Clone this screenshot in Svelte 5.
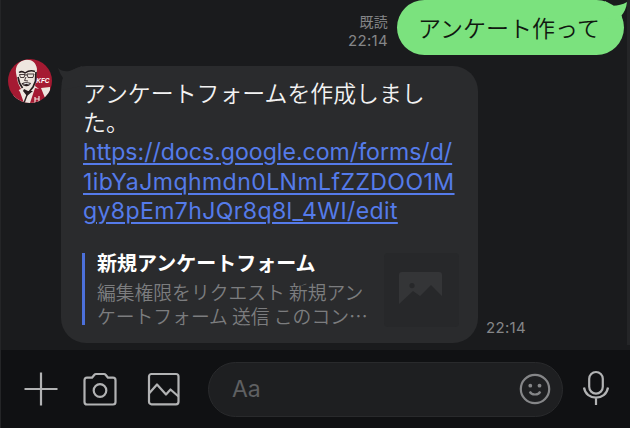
<script lang="ts">
	const sent = { text: 'アンケート作って', read: '既読', time: '22:14' };
	const received = {
		lines: ['アンケートフォームを作成しまし', 'た。'],
		link: ['https://docs.google.com/forms/d/', '1ibYaJmqhmdn0LNmLfZZDOO1M', 'gy8pEm7hJQr8q8l_4WI/edit'],
		title: '新規アンケートフォーム',
		description: ['編集権限をリクエスト 新規アン', 'ケートフォーム 送信 このコン…'],
		time: '22:14',
	};
</script>

<div class="screen">
	<main>
		<div class="row sent">
			<div class="meta">
				<span class="read">{sent.read}</span>
				<span>{sent.time}</span>
			</div>
			<div class="bubble green">
				{sent.text}
				<svg class="tail" width="24" height="22" viewBox="0 0 24 22">
					<path d="M1 1L7 5.6C12 6 18 5 23 2C22.5 8 20 12.5 17.5 15.5L18.5 21L1 18Z" fill="#7be27e" />
				</svg>
			</div>
		</div>

		<div class="row received">
			<svg class="avatar" width="44" height="44" viewBox="0 0 44 44">
				<defs>
					<clipPath id="face"><circle cx="22" cy="22" r="22" /></clipPath>
				</defs>
				<g clip-path="url(#face)">
					<rect width="44" height="44" fill="#a51a32" />
					<path d="M8 14C7 7 11 2 17 1C23 0 28 3 29 10L28 20L27 27L31 30L33 44H4L6 33L13 30L10 24Z" fill="#eee6df" />
					<path d="M10 30L5 32L4 44H16L12 33ZM27 29L36 31L38 44H22Z" fill="#a51a32" />
					<path d="M33 29L37 39L42 36V28Z" fill="#eee6df" />
					<path d="M27 38V44M31 37V44M27 40H31" fill="none" stroke="#eee6df" stroke-width="1.2" />
					<path d="M11 13.500Q14 11.500 17 14Q22 10.500 27 12.500" fill="none" stroke="#261b1d" stroke-width="1.500" />
					<path d="M11.500 15.500H17L16 18.500H12.500ZM19 15H26L25 18.500H20ZM17 16H19M18 18L16.500 21.500L20 22" fill="none" stroke="#35282a" stroke-width=".9" />
					<path d="M28 13L27.500 22L25 28L21 33M10 18L11.500 24L14.500 29" fill="none" stroke="#261b1d" stroke-width="1.700" />
					<path d="M13.500 24.500Q17 22.500 23 24Q21.500 27.500 18 27.200Q15 27 13.500 24.500ZM16 30L15 32L19 37L25 32L20 32Z" fill="#261b1d" />
					<path d="M15.500 25Q18 24 21.500 25" fill="none" stroke="#fff" />
					<path d="M19 36L16 44" stroke="#261b1d" stroke-width="1.400" />
				</g>
				<text x="28.2" y="23.7">KFC</text>
			</svg>
			<div class="bubble dark">
				<svg class="tail" width="26" height="24" viewBox="0 0 26 24">
					<path d="M1 2C5 6 11 6 15 4L25 0V20L5 24Q4 15 6 12Q3 8 1 2Z" fill="#2a2b2d" />
				</svg>
				<div class="message">
					{#each received.lines as line}
						<div>{line}</div>
					{/each}
					<div class="link">
						{#each received.link as part, i}
							<div><span class="part{i}">{part}</span></div>
						{/each}
					</div>
				</div>
				<div class="preview">
					<div class="summary">
						<strong>{received.title}</strong>
						{#each received.description as line}
							<div>{line}</div>
						{/each}
					</div>
					<div class="thumb">
						<svg width="43" height="35" viewBox="0 0 43 35">
							<path fill-rule="evenodd" d="M3 0H40Q43 0 43 3V24L32 13L21 24L14 19L0 32V3Q0 0 3 0ZM13 11A2.6 2.6 0 1 0 13 16.2A2.6 2.6 0 1 0 13 11Z" fill="#343537" />
						</svg>
					</div>
				</div>
			</div>
			<span class="time">{received.time}</span>
		</div>
		<div class="scrollbar"></div>
	</main>

	<footer>
		<svg class="plus" width="34" height="34" viewBox="0 0 34 34">
			<path d="M17 .5V33.5M.5 17H33.5" />
		</svg>
		<svg class="camera" width="34" height="34" viewBox="0 0 34 34">
			<path d="M4 5.7H9L11.2 3Q12 2 13 2H21Q22 2 22.8 3L25 5.7H30Q32.5 5.7 32.5 8.2V30Q32.5 32.5 30 32.5H4Q1.5 32.5 1.5 30V8.2Q1.5 5.7 4 5.7Z" />
			<circle cx="17" cy="18.5" r="6.3" />
		</svg>
		<svg class="gallery" width="34" height="34" viewBox="0 0 34 34">
			<rect x="2" y="2" width="29.5" height="30.3" rx="2.5" />
			<path d="M2 21.5L10 12.5L19 22.5L23.5 17.5L31.5 24.5" />
		</svg>
		<div class="input">
			<span>Aa</span>
			<svg class="smile" width="32" height="32" viewBox="0 0 32 32">
				<circle cx="16" cy="16" r="14.2" />
				<path d="M10.8 18.5C12.3 22.5 19.7 22.5 21.2 18.5" />
				<circle class="eye" cx="11.3" cy="12.7" r="1.9" />
				<circle class="eye" cx="20.5" cy="12.7" r="1.9" />
			</svg>
		</div>
		<svg class="mic" width="28" height="36" viewBox="0 0 28 36">
			<rect x="7.2" y="2" width="13.6" height="21.6" rx="6.8" />
			<path d="M2 17.5C4 31 24 31 26 17.5M14 27.8V35" />
		</svg>
	</footer>
</div>

<style>
	:global(body) {
		margin: 0;
		background: #1a1b1d;
	}
	.screen {
		width: 630px;
		height: 428px;
		box-sizing: border-box;
		display: flex;
		flex-direction: column;
		overflow: hidden;
		background: #1a1b1d;
		border-left: 1px solid #242527;
		font-family: Inter, 'Noto Sans CJK JP', sans-serif;
	}
	main {
		position: relative;
		height: 350px;
	}
	.row {
		display: flex;
	}
	.sent {
		justify-content: flex-end;
		height: 66px;
		padding-right: 6px;
	}
	.meta {
		display: flex;
		flex-direction: column;
		align-items: flex-end;
		padding: 12px 9px 0 0;
		font-size: 15px;
		line-height: 19px;
		letter-spacing: 0.3px;
		color: #858688;
	}
	.read {
		font-size: 14px;
		line-height: 19px;
	}
	.bubble {
		position: relative;
		box-sizing: border-box;
	}
	.green {
		width: 227px;
		height: 55px;
		padding-left: 21px;
		border-radius: 28px;
		background: #7be27e;
		color: #101810;
		font-size: 23px;
		line-height: 54px;
		white-space: nowrap;
		font-family: 'Noto Sans CJK JP', sans-serif;
		font-weight: 350;
	}
	.green .tail {
		position: absolute;
		right: -4px;
		top: 0;
	}
	.avatar {
		margin: -7px 9px 0 7px;
		flex: none;
	}
	.avatar text {
		fill: #fff;
		font: italic bold 6.5px 'Liberation Sans', sans-serif;
	}
	.dark {
		width: 417px;
		height: 277px;
		padding: 14px 19px 0 21px;
		border-radius: 25px;
		background: #2a2b2d;
	}
	.dark .tail {
		position: absolute;
		left: -4px;
		top: 0;
	}
	.message {
		height: 146px;
		padding-left: 1px;
		font-size: 22.9px;
		line-height: 29.4px;
		color: #f2f2f2;
		white-space: nowrap;
		font-weight: 350;
	}
	.message div {
		height: 29.4px;
	}
	.message .link {
		height: auto;
		margin-top: -0.8px;
		color: #557bea;
		font-weight: 400;
		font-size: 23.1px;
		line-height: 29.6px;
	}
	.link div {
		height: 29.6px;
	}
	.link span {
		text-decoration: underline;
		text-decoration-thickness: 1.5px;
		text-underline-offset: 3px;
	}
	.link .part1 {
		letter-spacing: 0.4px;
	}
	.link .part2 {
		letter-spacing: 0.35px;
	}
	.preview {
		display: flex;
		justify-content: space-between;
		margin-top: 27px;
		height: 73px;
	}
	.summary {
		box-sizing: border-box;
		height: 72px;
		padding-left: 12px;
		border-left: 3px solid #4c70da;
		color: #7c7d7f;
		font: 350 18.8px/24px 'Noto Sans CJK JP', sans-serif;
		white-space: nowrap;
	}
	.summary strong {
		display: block;
		height: 27px;
		font-size: 20px;
		font-weight: 700;
		line-height: 19px;
		color: #fff;
	}
	.thumb {
		display: flex;
		align-items: center;
		justify-content: center;
		width: 75px;
		height: 74px;
		border-radius: 4px;
		background: #27282a;
	}
	.thumb svg {
		margin: -2px 0 0 -2px;
	}
	.time {
		align-self: flex-end;
		margin: 0 0 6px 8px;
		font-size: 15px;
		line-height: 19px;
		letter-spacing: 0.3px;
		color: #858688;
	}
	.scrollbar {
		position: absolute;
		top: 0;
		right: 0;
		width: 3px;
		height: 345px;
		background: #242527;
	}
	footer {
		display: flex;
		align-items: center;
		height: 78px;
		background: #101113;
	}
	footer svg {
		flex: none;
		fill: none;
		stroke: #b2b3b4;
		stroke-width: 2.2;
		stroke-linejoin: round;
	}
	.plus {
		margin-left: 23px;
	}
	.camera {
		margin-left: 25px;
	}
	.gallery {
		margin-left: 30px;
	}
	.input {
		display: flex;
		align-items: center;
		justify-content: space-between;
		box-sizing: border-box;
		width: 355px;
		height: 55px;
		margin-left: 27px;
		padding: 0 11px 0 23px;
		border: 1px solid #292a2c;
		border-radius: 28px;
		background: #1e1f21;
		color: #5f6062;
		font-size: 23px;
	}
	footer .smile {
		stroke: #858688;
		stroke-width: 2.2;
	}
	.smile .eye {
		fill: #858688;
		stroke: none;
	}
	.mic {
		margin: -2px 0 0 19px;
	}
</style>
